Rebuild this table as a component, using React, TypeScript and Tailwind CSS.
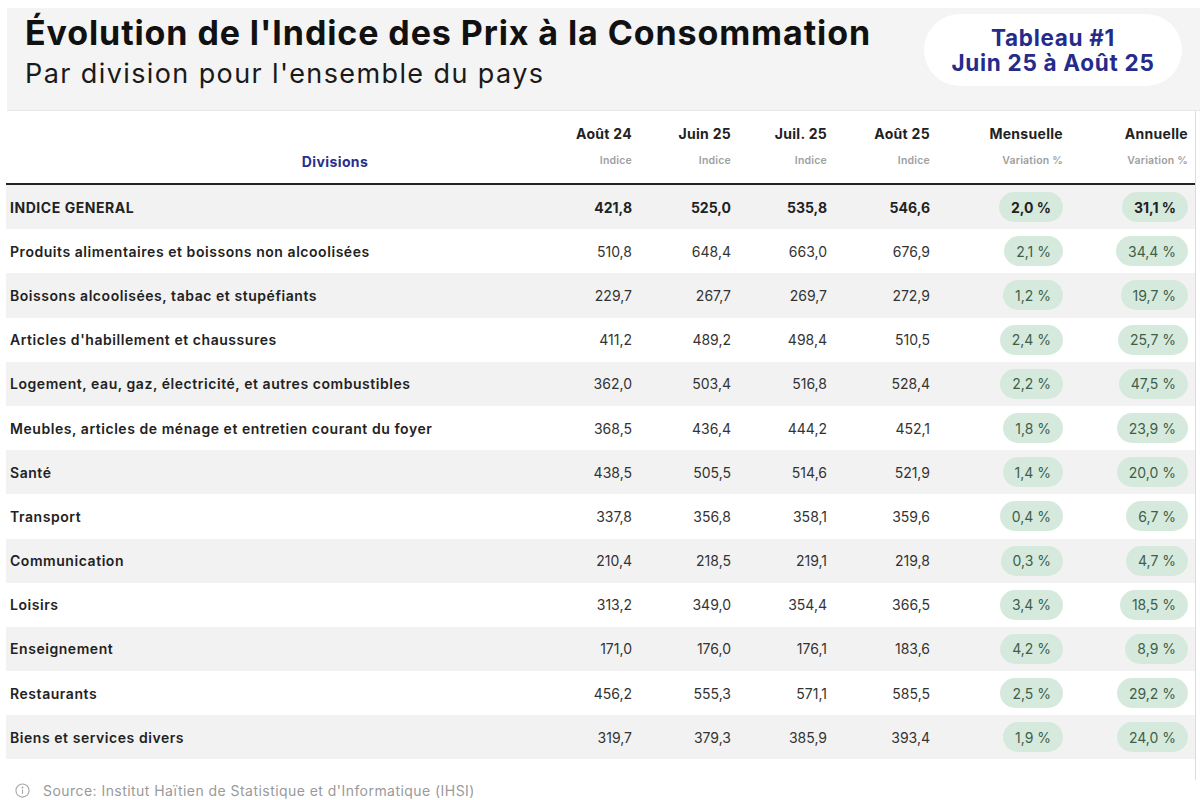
import React from "react";

type Row = { name: string; v: string[]; m: string; a: string; bold?: boolean };

const rows: Row[] = [
  { name: "INDICE GENERAL", v: ["421,8", "525,0", "535,8", "546,6"], m: "2,0 %", a: "31,1 %", bold: true },
  { name: "Produits alimentaires et boissons non alcoolisées", v: ["510,8", "648,4", "663,0", "676,9"], m: "2,1 %", a: "34,4 %" },
  { name: "Boissons alcoolisées, tabac et stupéfiants", v: ["229,7", "267,7", "269,7", "272,9"], m: "1,2 %", a: "19,7 %" },
  { name: "Articles d'habillement et chaussures", v: ["411,2", "489,2", "498,4", "510,5"], m: "2,4 %", a: "25,7 %" },
  { name: "Logement, eau, gaz, électricité, et autres combustibles", v: ["362,0", "503,4", "516,8", "528,4"], m: "2,2 %", a: "47,5 %" },
  { name: "Meubles, articles de ménage et entretien courant du foyer", v: ["368,5", "436,4", "444,2", "452,1"], m: "1,8 %", a: "23,9 %" },
  { name: "Santé", v: ["438,5", "505,5", "514,6", "521,9"], m: "1,4 %", a: "20,0 %" },
  { name: "Transport", v: ["337,8", "356,8", "358,1", "359,6"], m: "0,4 %", a: "6,7 %" },
  { name: "Communication", v: ["210,4", "218,5", "219,1", "219,8"], m: "0,3 %", a: "4,7 %" },
  { name: "Loisirs", v: ["313,2", "349,0", "354,4", "366,5"], m: "3,4 %", a: "18,5 %" },
  { name: "Enseignement", v: ["171,0", "176,0", "176,1", "183,6"], m: "4,2 %", a: "8,9 %" },
  { name: "Restaurants", v: ["456,2", "555,3", "571,1", "585,5"], m: "2,5 %", a: "29,2 %" },
  { name: "Biens et services divers", v: ["319,7", "379,3", "385,9", "393,4"], m: "1,9 %", a: "24,0 %" },
];

const heads = [
  { t: "Août 24", s: "Indice" },
  { t: "Juin 25", s: "Indice" },
  { t: "Juil. 25", s: "Indice" },
  { t: "Août 25", s: "Indice" },
  { t: "Mensuelle", s: "Variation %" },
  { t: "Annuelle", s: "Variation %" },
];

const grid = "grid grid-cols-[542px_80px_99px_96px_103px_133px_125px] pl-[4px]";

export default function App() {
  return (
    <div className="w-[1200px] h-[800px] bg-white overflow-hidden font-['Inter','Liberation_Sans',sans-serif] text-[#222]">
      <div className="pt-[8px] pl-[7px]">
        <div className="h-[103px] bg-[#f4f4f4] border-b border-[#e6e6e6] flex items-start justify-between pl-[18px] pr-[18px]">
          <div className="pt-[5px]">
            <div className="text-[34px] leading-[40px] font-bold tracking-[0.9px] text-[#111]">
              Évolution de l'Indice des Prix à la Consommation
            </div>
            <div className="text-[27px] leading-[34px] mt-[4px] tracking-[1.4px] text-[#1a1a1a]">
              Par division pour l'ensemble du pays
            </div>
          </div>
          <div className="mt-[6px] w-[258px] h-[72px] rounded-full bg-white flex flex-col items-center justify-center text-[#252b8a] font-bold text-[22.5px] leading-[25px] tracking-[0.7px]">
            <div>Tableau #1</div>
            <div>Juin 25 à Août 25</div>
          </div>
        </div>
      </div>

      <div className="ml-[6px] w-[1190px] border-r border-[#dcdcdc]">
        <div className={`${grid} h-[74px] border-b-[2px] border-[#222]`}>
          <div className="flex items-end justify-center pb-[11px] pl-[108px] text-[14px] font-bold tracking-[0.4px] text-[#2a2f8c]">
            Divisions
          </div>
          {heads.map((h) => (
            <div key={h.t} className="flex flex-col items-end pt-[13px]">
              <div className="text-[14px] font-bold leading-[20px] tracking-[0.3px] text-[#222]">{h.t}</div>
              <div className="text-[10.5px] font-semibold leading-[14px] mt-[10px] tracking-[0.2px] text-[#a0a0a0]">{h.s}</div>
            </div>
          ))}
        </div>
        {rows.map((r, i) => (
          <div
            key={r.name}
            className={`${grid} h-[44.2px] items-center ${i % 2 === 0 ? "bg-[#f2f2f2]" : "bg-white"}`}
          >
            <div className={`text-[14px] tracking-[0.55px] ${r.bold ? "font-bold" : "font-semibold"} text-[#222]`}>{r.name}</div>
            {r.v.map((x, j) => (
              <div key={j} className={`text-right text-[14px] ${r.bold ? "font-bold text-[#222]" : "text-[#333]"}`}>
                {x}
              </div>
            ))}
            <div className="flex justify-end">
              <span className={`h-[30px] px-[12px] rounded-full bg-[#d5eadd] flex items-center text-[14px] ${r.bold ? "font-bold text-[#222]" : "text-[#3f5e4a]"}`}>
                {r.m}
              </span>
            </div>
            <div className="flex justify-end">
              <span className={`h-[30px] px-[12px] rounded-full bg-[#d5eadd] flex items-center text-[14px] ${r.bold ? "font-bold text-[#222]" : "text-[#3f5e4a]"}`}>
                {r.a}
              </span>
            </div>
          </div>
        ))}
        <div className="h-[21px]" />
      </div>

      <div className="flex items-center gap-[13px] pl-[15px] h-[20px] text-[14px] tracking-[0.45px] text-[#9a9a9a]">
        <svg width="15" height="15" viewBox="0 0 16 16" fill="none" stroke="#a8a8a8" strokeWidth="1.2">
          <circle cx="8" cy="8" r="7" />
          <line x1="8" y1="7" x2="8" y2="11.5" />
          <circle cx="8" cy="4.8" r="0.5" fill="#a8a8a8" />
        </svg>
        <span>Source: Institut Haïtien de Statistique et d'Informatique (IHSI)</span>
      </div>
    </div>
  );
}
